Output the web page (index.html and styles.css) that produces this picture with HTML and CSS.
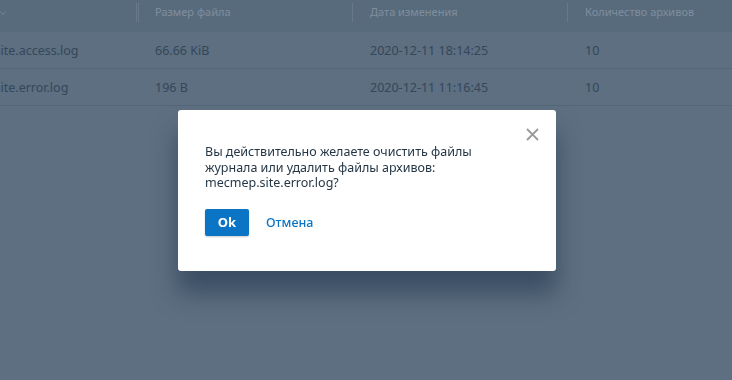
FILE: index.html
```html
<!DOCTYPE html>
<html lang="ru">
<head>
<meta charset="utf-8">
<link rel="stylesheet" href="styles.css">
</head>
<body>
<div class="page">
  <div class="table">
    <div class="row head">
      <div class="cell"><span>Имя файла</span><svg class="chev" width="10" height="6" viewBox="0 0 10 6"><path d="M1 1l4 4 4-4" fill="none" stroke="currentColor" stroke-width="1.2"/></svg><i class="sep double"></i></div>
      <div class="cell"><span>Размер файла</span><i class="sep"></i></div>
      <div class="cell"><span>Дата изменения</span><i class="sep"></i></div>
      <div class="cell"><span>Количество архивов</span></div>
    </div>
    <div class="row">
      <div class="cell">mecmep.site.access.log</div>
      <div class="cell">66.66 KiB</div>
      <div class="cell">2020-12-11 18:14:25</div>
      <div class="cell">10</div>
    </div>
    <div class="row">
      <div class="cell">mecmep.site.error.log</div>
      <div class="cell">196 B</div>
      <div class="cell">2020-12-11 11:16:45</div>
      <div class="cell">10</div>
    </div>
  </div>
</div>
<div class="overlay">
  <div class="modal">
    <button class="close" aria-label="close"><svg width="13" height="13" viewBox="0 0 13 13"><path d="M1 1l11 11M12 1L1 12" stroke="currentColor" stroke-width="1.8"/></svg></button>
    <p class="msg">Вы действительно желаете очистить файлы журнала или удалить файлы архивов: mecmep.site.error.log?</p>
    <div class="actions">
      <button class="ok">Ok</button>
      <button class="cancel">Отмена</button>
    </div>
  </div>
</div>
</body>
</html>
```
FILE: styles.css
```css
html, body {
  margin: 0;
  padding: 0;
  width: 732px;
  height: 380px;
  overflow: hidden;
  background: #5d6f80;
  font-family: "Noto Sans", "Open Sans", sans-serif;
}
.page {
  width: 732px;
  height: 380px;
  overflow: hidden;
}
.table {
  margin-left: -77px;
  width: 860px;
}
.row {
  display: grid;
  grid-template-columns: 215px 215px 215px 215px;
  height: 36px;
  border-bottom: 1px solid #53667a;
  color: #34475b;
  font-size: 12.5px;
}
.row.head {
  height: 31px;
  background: #586b7d;
  border-bottom: 1px solid #586b7d;
  color: #7f8e9e;
  font-size: 11px;
}
.cell {
  position: relative;
  display: flex;
  align-items: center;
  padding-left: 17px;
  white-space: nowrap;
}
.head .cell {
  align-items: flex-start;
  padding-top: 4px;
}
.chev {
  color: #7f8e9e;
  margin-left: auto;
  margin-right: 132px;
  margin-top: 6px;
}
.sep {
  position: absolute;
  right: 0;
  top: 3px;
  width: 1px;
  height: 19px;
  background: #66788a;
}
.sep.double {
  width: 3px;
  right: -1px;
  background: none;
  border-left: 1px solid #66788a;
  border-right: 1px solid #66788a;
  box-sizing: border-box;
}
.overlay {
  position: fixed;
  inset: 0;
  display: flex;
  justify-content: center;
  align-items: flex-start;
}
.modal {
  position: relative;
  margin-top: 110px;
  margin-left: 2px;
  width: 378px;
  height: 161px;
  box-sizing: border-box;
  padding: 34px 27px 0;
  background: #fff;
  border-radius: 3px;
  box-shadow: 0 22px 24px rgba(30, 50, 75, 0.55);
}
.close {
  position: absolute;
  top: 14px;
  right: 14px;
  width: 20px;
  height: 20px;
  padding: 3px;
  border: 0;
  background: none;
  color: #9a9a9a;
  cursor: pointer;
  display: flex;
  align-items: center;
  justify-content: center;
}
.msg {
  margin: 0;
  width: 300px;
  font-size: 12.5px;
  line-height: 15.5px;
  color: #253746;
}
.actions {
  display: flex;
  align-items: center;
  gap: 17px;
  margin-top: 18px;
}
.ok {
  width: 44px;
  height: 27px;
  border: 0;
  border-radius: 2px;
  background: #0b74c4;
  color: #fff;
  font-family: inherit;
  font-weight: 700;
  font-size: 13px;
  box-shadow: 0 1px 2px rgba(0,0,0,0.2);
}
.cancel {
  border: 0;
  background: none;
  padding: 0;
  color: #0b74c4;
  font-family: inherit;
  font-size: 12.5px;
  font-weight: 500;
}
```
